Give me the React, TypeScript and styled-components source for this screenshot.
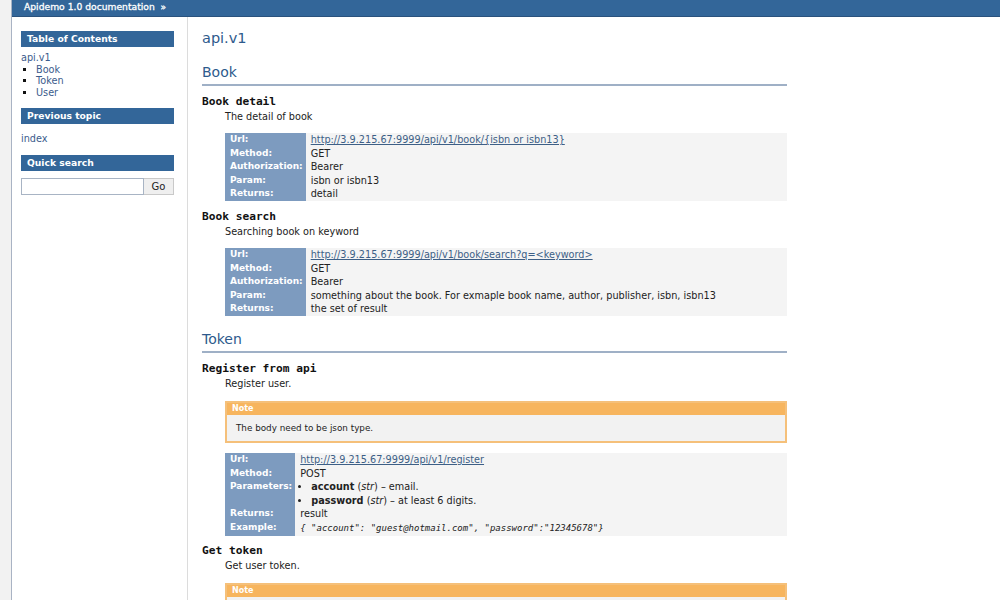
import React from 'react';
import styled, { createGlobalStyle } from 'styled-components';

const GlobalStyle = createGlobalStyle`
  html, body {
    margin: 0;
    padding: 0;
    background: #f2f2f2;
    font-family: "DejaVu Sans", "Noto Sans", sans-serif;
    font-size: 9.7px;
    color: #222;
  }
`;

const Page = styled.div`
  margin-left: 11px;
  border-left: 1px solid #a9b3c4;
  background: #fff;
  height: 600px;
  overflow: hidden;
  display: flex;
  flex-direction: column;
`;

const TopBar = styled.div`
  flex-shrink: 0;
  height: 17px;
  background: #336699;
  color: #fff;
  font-size: 9.2px;
  line-height: 14px;
  -webkit-text-stroke: 0.3px #fff;
  padding-left: 12px;
  border-bottom: 1px solid #2a527d;
  box-sizing: border-box;
`;

const Main = styled.div`
  flex: 1;
  display: flex;
`;

const Sidebar = styled.div`
  width: 176px;
  flex-shrink: 0;
  box-sizing: border-box;
  padding: 14px 13px 0 9px;
  border-right: 1px solid #dcdcdc;
`;

const SideHeading = styled.div<{ $top?: number }>`
  background: #336699;
  color: #fff;
  font-weight: bold;
  font-size: 9.2px;
  height: 16px;
  line-height: 16px;
  padding-left: 6px;
  margin-top: ${(p) => p.$top ?? 0}px;
`;

const SideLink = styled.a<{ $top?: number }>`
  display: block;
  color: #3b5b8c;
  text-decoration: none;
  line-height: 11.5px;
  margin-top: ${(p) => p.$top ?? 0}px;
`;

const SideList = styled.ul`
  list-style: square;
  margin: 0;
  padding-left: 15px;
  line-height: 11.5px;
  li {
    color: #111;
  }
  a {
    color: #3b5b8c;
    text-decoration: none;
  }
`;

const SearchRow = styled.div`
  display: flex;
  margin-top: 7px;
  height: 17px;
`;

const SearchInput = styled.input`
  width: 123px;
  box-sizing: border-box;
  border: 1px solid #a8b4c4;
  padding: 0;
  margin: 0;
  height: 17px;
`;

const GoButton = styled.button`
  flex: 1;
  height: 17px;
  margin: 0;
  padding: 0;
  border: 1px solid #c9c9c9;
  border-left: none;
  background: #efefef;
  font-family: inherit;
  font-size: 10px;
  color: #222;
`;

const Content = styled.div`
  width: 585px;
  padding-left: 14px;
`;

const H1 = styled.h1`
  margin: 12px 0 0;
  font-size: 14.5px;
  line-height: 18px;
  font-weight: normal;
  color: #2e5a8c;
`;

const H2 = styled.h2<{ $top: number }>`
  margin: ${(p) => p.$top}px 0 0;
  font-size: 14px;
  line-height: 18px;
  font-weight: normal;
  color: #2e5a8c;
  padding-bottom: 3px;
  border-bottom: 2px solid #9fb0c6;
`;

const Signature = styled.div<{ $top?: number }>`
  margin-top: ${(p) => p.$top ?? 9}px;
  font-family: "DejaVu Sans Mono", monospace;
  font-weight: bold;
  font-size: 11.2px;
  line-height: 14px;
  color: #111;
`;

const Desc = styled.div`
  margin-left: 23px;
`;

const DescText = styled.p`
  margin: 2px 0 0;
  line-height: 12px;
`;

const FieldGrid = styled.div`
  display: grid;
  grid-template-columns: max-content 1fr;
  margin-top: 10px;
  background: #f4f4f4;
  line-height: 13.6px;
`;

const FieldName = styled.div<{ $span?: number }>`
  background: #7d9bbf;
  color: #fff;
  font-weight: bold;
  font-size: 9px;
  padding: 0 3px 0 5px;
  grid-row: span ${(p) => p.$span ?? 1};
`;

const FieldBody = styled.div`
  padding-left: 5px;
`;

const UrlLink = styled.a`
  color: #3d5f86;
  text-decoration: underline;
`;

const ParamList = styled.ul`
  margin: 0;
  padding-left: 11px;
  list-style: disc;
`;

const Example = styled.span`
  font-family: "DejaVu Sans Mono", monospace;
  font-style: italic;
  font-size: 9px;
`;

const Note = styled.div`
  margin-top: 11px;
  border: 2px solid #f5c07a;
  background: #f2f2f2;
`;

const NoteTitle = styled.div`
  background: #f7b55e;
  color: #fff;
  font-weight: bold;
  font-size: 8px;
  line-height: 12px;
  padding-left: 5px;
`;

const NoteBody = styled.div`
  padding: 7px 9px 7px;
  font-size: 8.8px;
  line-height: 12px;
`;

type Field = { name: string; value: React.ReactNode; span?: number };

const Fields = ({ rows }: { rows: Field[] }) => (
  <FieldGrid>
    {rows.map((r) => (
      <React.Fragment key={r.name}>
        <FieldName $span={r.span}>{r.name}</FieldName>
        <FieldBody>{r.value}</FieldBody>
      </React.Fragment>
    ))}
  </FieldGrid>
);

const App = () => (
  <>
    <GlobalStyle />
    <Page>
      <TopBar>Apidemo 1.0 documentation&nbsp;&nbsp;»</TopBar>
      <Main>
        <Sidebar>
          <SideHeading>Table of Contents</SideHeading>
          <SideLink href="#" $top={5}>api.v1</SideLink>
          <SideList>
            <li><a href="#">Book</a></li>
            <li><a href="#">Token</a></li>
            <li><a href="#">User</a></li>
          </SideList>
          <SideHeading $top={10}>Previous topic</SideHeading>
          <SideLink href="#" $top={9}>index</SideLink>
          <SideHeading $top={10}>Quick search</SideHeading>
          <SearchRow>
            <SearchInput type="text" />
            <GoButton>Go</GoButton>
          </SearchRow>
        </Sidebar>
        <Content>
          <H1>api.v1</H1>
          <H2 $top={16}>Book</H2>

          <Signature>Book detail</Signature>
          <Desc>
            <DescText>The detail of book</DescText>
            <Fields
              rows={[
                { name: 'Url:', value: <UrlLink href="#">http://3.9.215.67:9999/api/v1/book/{'{isbn or isbn13}'}</UrlLink> },
                { name: 'Method:', value: 'GET' },
                { name: 'Authorization:', value: 'Bearer' },
                { name: 'Param:', value: 'isbn or isbn13' },
                { name: 'Returns:', value: 'detail' },
              ]}
            />
          </Desc>

          <Signature $top={9}>Book search</Signature>
          <Desc>
            <DescText>Searching book on keyword</DescText>
            <Fields
              rows={[
                { name: 'Url:', value: <UrlLink href="#">http://3.9.215.67:9999/api/v1/book/search?q=&lt;keyword&gt;</UrlLink> },
                { name: 'Method:', value: 'GET' },
                { name: 'Authorization:', value: 'Bearer' },
                { name: 'Param:', value: 'something about the book. For exmaple book name, author, publisher, isbn, isbn13' },
                { name: 'Returns:', value: 'the set of result' },
              ]}
            />
          </Desc>

          <H2 $top={14}>Token</H2>

          <Signature>Register from api</Signature>
          <Desc>
            <DescText>Register user.</DescText>
            <Note>
              <NoteTitle>Note</NoteTitle>
              <NoteBody>The body need to be json type.</NoteBody>
            </Note>
            <Fields
              rows={[
                { name: 'Url:', value: <UrlLink href="#">http://3.9.215.67:9999/api/v1/register</UrlLink> },
                { name: 'Method:', value: 'POST' },
                {
                  name: 'Parameters:',
                  value: (
                    <ParamList>
                      <li><b>account</b> (<i>str</i>) – email.</li>
                      <li><b>password</b> (<i>str</i>) – at least 6 digits.</li>
                    </ParamList>
                  ),
                },
                { name: 'Returns:', value: 'result' },
                { name: 'Example:', value: <Example>{'{ "account": "guest@hotmail.com", "password":"12345678"}'}</Example> },
              ]}
            />
          </Desc>

          <Signature $top={8}>Get token</Signature>
          <Desc>
            <DescText>Get user token.</DescText>
            <Note>
              <NoteTitle>Note</NoteTitle>
              <NoteBody>The body need to be json type.</NoteBody>
            </Note>
          </Desc>
        </Content>
      </Main>
    </Page>
  </>
);

export default App;
